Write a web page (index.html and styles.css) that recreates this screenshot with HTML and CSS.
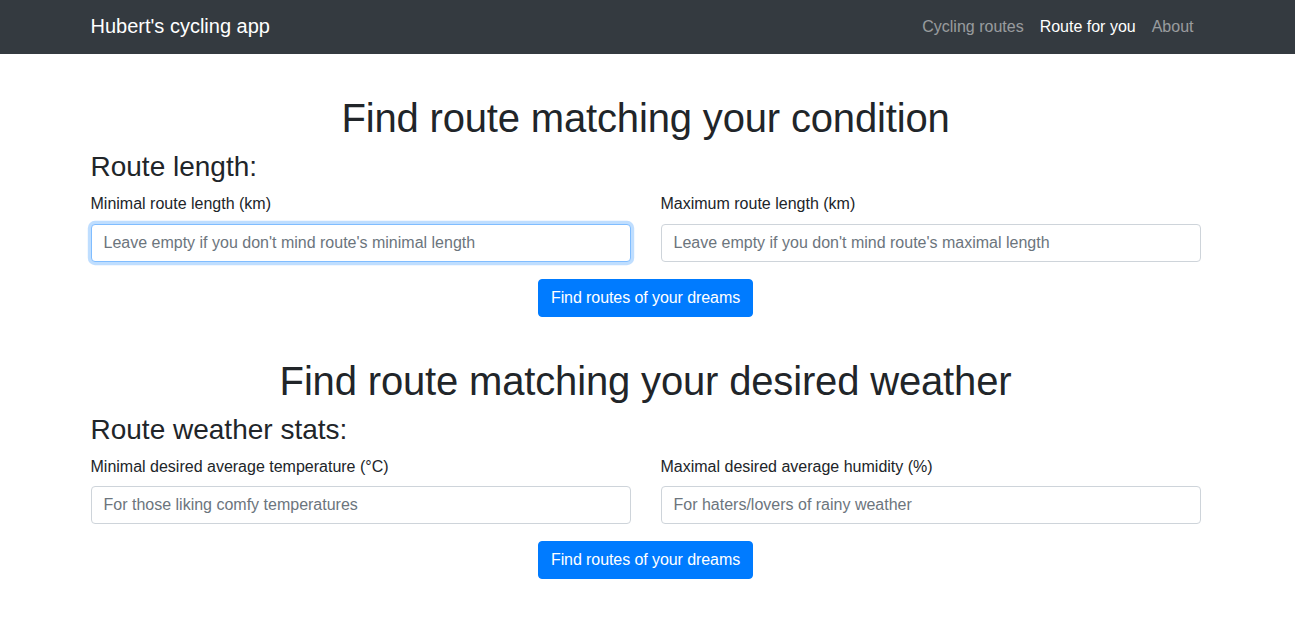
FILE: index.html
```html
<!DOCTYPE html>
<html lang="en">
<head>
<meta charset="utf-8">
<title>Hubert's cycling app</title>
<link rel="stylesheet" href="styles.css">
</head>
<body>
<nav class="navbar">
  <div class="container navbar-inner">
    <a class="brand" href="#">Hubert's cycling app</a>
    <ul class="nav">
      <li><a class="nav-link" href="#">Cycling routes</a></li>
      <li><a class="nav-link active" href="#">Route for you</a></li>
      <li><a class="nav-link" href="#">About</a></li>
    </ul>
  </div>
</nav>
<main class="container">
  <section class="section">
    <h1 class="title">Find route matching your condition</h1>
    <form class="form">
      <h3 class="subtitle">Route length:</h3>
      <div class="row">
        <div class="col">
          <label class="label" for="minlen">Minimal route length (km)</label>
          <input class="input focused" id="minlen" type="text" placeholder="Leave empty if you don't mind route's minimal length" autofocus>
        </div>
        <div class="col">
          <label class="label" for="maxlen">Maximum route length (km)</label>
          <input class="input" id="maxlen" type="text" placeholder="Leave empty if you don't mind route's maximal length">
        </div>
      </div>
      <div class="actions">
        <button class="btn" type="button">Find routes of your dreams</button>
      </div>
    </form>
  </section>
  <section class="section">
    <h1 class="title">Find route matching your desired weather</h1>
    <form class="form">
      <h3 class="subtitle">Route weather stats:</h3>
      <div class="row">
        <div class="col">
          <label class="label" for="mintemp">Minimal desired average temperature (°C)</label>
          <input class="input" id="mintemp" type="text" placeholder="For those liking comfy temperatures">
        </div>
        <div class="col">
          <label class="label" for="maxhum">Maximal desired average humidity (%)</label>
          <input class="input" id="maxhum" type="text" placeholder="For haters/lovers of rainy weather">
        </div>
      </div>
      <div class="actions">
        <button class="btn" type="button">Find routes of your dreams</button>
      </div>
    </form>
  </section>
</main>
</body>
</html>
```
FILE: styles.css
```css
* { box-sizing: border-box; }
html, body {
  margin: 0;
  padding: 0;
}
body {
  font-family: "Liberation Sans", Arial, sans-serif;
  font-size: 16px;
  line-height: 1.5;
  color: #212529;
  background: #fff;
}
.container {
  width: 1140px;
  max-width: 100%;
  margin: 0 auto;
  padding: 0 15px;
  position: relative;
  left: -2px;
}
.navbar {
  background: #343a40;
  height: 54px;
}
.navbar-inner {
  display: flex;
  align-items: center;
  justify-content: space-between;
  height: 54px;
}
.brand {
  color: #fff;
  font-size: 20px;
  line-height: 30px;
  text-decoration: none;
  margin-top: -2px;
}
.nav {
  list-style: none;
  margin: 0;
  padding: 0;
  display: flex;
}
.nav-link {
  display: block;
  padding: 8px;
  line-height: 24px;
  color: rgba(255, 255, 255, 0.5);
  text-decoration: none;
  margin-top: -1px;
}
.nav li:last-child .nav-link { padding-right: 7px; }
.nav-link.active { color: #fff; }
.section { padding-top: 40px; }
.title {
  margin: 0 0 8px;
  font-size: 40px;
  font-weight: 500;
  line-height: 1.2;
  letter-spacing: -0.16px;
  text-align: center;
}
.subtitle {
  margin: 0 0 8px;
  font-size: 28px;
  font-weight: 500;
  line-height: 1.2;
}
.section + .section .subtitle { margin-bottom: 9px; }
.section + .section .label { margin-bottom: 7px; }
.row {
  display: flex;
  margin: 0 -15px;
}
.col {
  flex: 1 1 0;
  padding: 0 15px;
  margin-bottom: 17px;
}
.label {
  display: block;
  margin-bottom: 8px;
}
.input {
  display: block;
  width: 100%;
  height: 38px;
  padding: 6px 12px;
  font-family: inherit;
  font-size: 16px;
  line-height: 1.5;
  color: #495057;
  background: #fff;
  border: 1px solid #ced4da;
  border-radius: 4px;
  outline: none;
}
.input::placeholder { color: #6c757d; opacity: 1; }
.input.focused, .input:focus {
  border-color: #80bdff;
  box-shadow: 0 0 0 3.2px rgba(0, 123, 255, 0.25);
}
.actions {
  display: flex;
  justify-content: center;
}
.btn {
  font-family: inherit;
  font-size: 16px;
  line-height: 1.5;
  letter-spacing: -0.08px;
  padding: 6px 12px;
  color: #fff;
  background: #007bff;
  border: 1px solid #007bff;
  border-radius: 4px;
  cursor: pointer;
}
```
